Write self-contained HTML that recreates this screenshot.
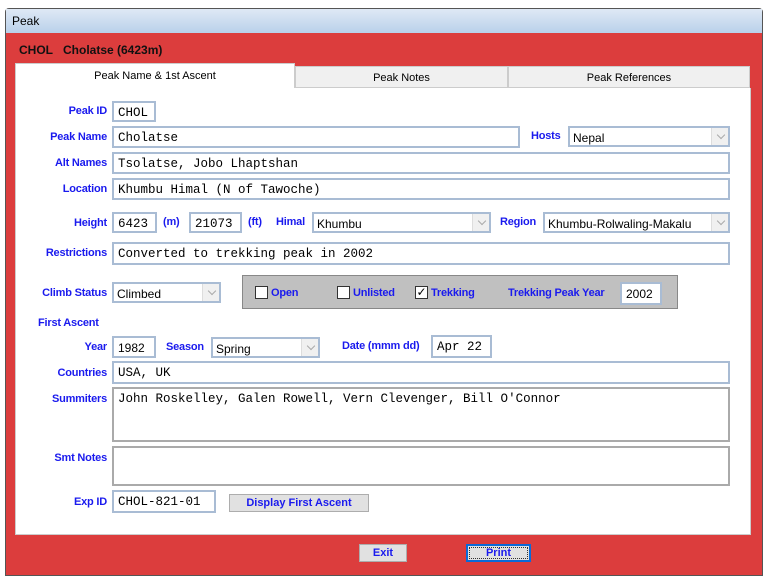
<!DOCTYPE html>
<html><head><style>
*{box-sizing:border-box;margin:0;padding:0}
body{width:768px;height:582px;background:#fff;position:relative;overflow:hidden;font-family:"Liberation Sans",sans-serif}
.a{position:absolute}
.win{left:5px;top:8px;width:758px;height:568px;border:1px solid #555;border-radius:4px 4px 0 0;background:#dc3d3d}
.title{left:6px;top:9px;width:756px;height:24px;background:linear-gradient(#dfe9f5,#b9d1ea);font-size:12px;padding:5px 0 0 6px;color:#000}
.lbl{position:absolute;color:#1a1aee;font-weight:bold;font-size:11px;white-space:nowrap;letter-spacing:-.2px}
.r{text-align:right}
.in{position:absolute;background:#fff;border:2px solid #a9bcd4;font-family:"Liberation Mono",monospace;font-size:12.5px;padding:3px 0 0 4px;white-space:nowrap;color:#000}
.sel{position:absolute;background:#fff;border:2px solid #a9bcd4;font-size:12px;padding:3px 0 0 3px;color:#000}
.sel:after{content:"";position:absolute;right:0;top:0;width:16px;height:100%;background:#f0f0f0;border-left:1px solid #ddd}
.sel b{position:absolute;right:4px;top:4px;width:6px;height:6px;border-right:1px solid #aaa;border-bottom:1px solid #aaa;transform:rotate(45deg);z-index:2}
.cb{position:absolute;width:13px;height:13px;border:1px solid #333;background:#fff}
.btn{position:absolute;background:#e1e1e1;border:1px solid #adadad;color:#1a1aee;font-weight:bold;font-size:11px;text-align:center;padding-top:2px}
</style></head><body>
<div class="a win"></div>
<div class="a title">Peak</div>
<div class="a" style="left:19px;top:43px;font-size:12px;font-weight:bold;color:#111">CHOL&nbsp;&nbsp; Cholatse (6423m)</div>
<div class="a" style="left:15px;top:63px;width:280px;height:27px;background:#fff;border:1px solid #ccc;border-bottom:none;font-size:11px;text-align:center;padding-top:6px">Peak Name &amp; 1st Ascent</div>
<div class="a" style="left:295px;top:66px;width:213px;height:22px;background:#f0f0f0;border:1px solid #ccc;font-size:11px;text-align:center;padding-top:5px">Peak Notes</div>
<div class="a" style="left:508px;top:66px;width:242px;height:22px;background:#f0f0f0;border:1px solid #ccc;font-size:11px;text-align:center;padding-top:5px">Peak References</div>
<div class="a" style="left:15px;top:88px;width:736px;height:447px;background:#fff;border:1px solid #ccc;border-top:none"></div>

<div class="lbl r" style="right:661px;top:105px">Peak ID</div>
<div class="in" style="left:112px;top:101px;width:44px;height:21px">CHOL</div>
<div class="lbl r" style="right:661px;top:131px">Peak Name</div>
<div class="in" style="left:112px;top:126px;width:408px;height:22px">Cholatse</div>
<div class="lbl" style="left:531px;top:130px">Hosts</div>
<div class="sel" style="left:568px;top:126px;width:162px;height:21px">Nepal<b></b></div>
<div class="lbl r" style="right:661px;top:157px">Alt Names</div>
<div class="in" style="left:112px;top:152px;width:618px;height:22px">Tsolatse, Jobo Lhaptshan</div>
<div class="lbl r" style="right:661px;top:183px">Location</div>
<div class="in" style="left:112px;top:178px;width:618px;height:22px">Khumbu Himal (N of Tawoche)</div>

<div class="lbl r" style="right:661px;top:217px">Height</div>
<div class="in" style="left:112px;top:212px;width:45px;height:21px">6423</div>
<div class="lbl" style="left:163px;top:216px">(m)</div>
<div class="in" style="left:189px;top:212px;width:53px;height:21px">21073</div>
<div class="lbl" style="left:248px;top:216px">(ft)</div>
<div class="lbl" style="left:276px;top:216px">Himal</div>
<div class="sel" style="left:312px;top:212px;width:179px;height:21px">Khumbu<b></b></div>
<div class="lbl" style="left:500px;top:216px">Region</div>
<div class="sel" style="left:543px;top:212px;width:187px;height:21px">Khumbu-Rolwaling-Makalu<b></b></div>

<div class="lbl r" style="right:661px;top:247px">Restrictions</div>
<div class="in" style="left:112px;top:242px;width:618px;height:23px">Converted to trekking peak in 2002</div>

<div class="lbl r" style="right:661px;top:287px">Climb Status</div>
<div class="sel" style="left:112px;top:282px;width:109px;height:21px">Climbed<b></b></div>
<div class="a" style="left:242px;top:275px;width:436px;height:34px;background:#c0c0c0;border:1px solid #888"></div>
<div class="cb" style="left:255px;top:286px"></div><div class="lbl" style="left:271px;top:287px">Open</div>
<div class="cb" style="left:337px;top:286px"></div><div class="lbl" style="left:353px;top:287px">Unlisted</div>
<div class="cb" style="left:415px;top:286px;font-size:12px;line-height:11px;text-align:center">✓</div><div class="lbl" style="left:431px;top:287px">Trekking</div>
<div class="lbl" style="left:508px;top:287px">Trekking Peak Year</div>
<div class="in" style="left:620px;top:282px;width:42px;height:23px;font-family:'Liberation Sans',sans-serif;font-size:12px">2002</div>

<div class="lbl" style="left:38px;top:317px">First Ascent</div>
<div class="lbl r" style="right:661px;top:341px">Year</div>
<div class="in" style="left:112px;top:336px;width:44px;height:22px;font-family:'Liberation Sans',sans-serif;font-size:12px">1982</div>
<div class="lbl" style="left:166px;top:341px">Season</div>
<div class="sel" style="left:211px;top:337px;width:109px;height:21px">Spring<b></b></div>
<div class="lbl" style="left:342px;top:340px">Date (mmm dd)</div>
<div class="in" style="left:431px;top:335px;width:61px;height:23px">Apr 22</div>

<div class="lbl r" style="right:661px;top:367px">Countries</div>
<div class="in" style="left:112px;top:361px;width:618px;height:23px">USA, UK</div>
<div class="lbl r" style="right:661px;top:393px">Summiters</div>
<div class="in" style="left:112px;top:387px;width:618px;height:55px;border-color:#aaa">John Roskelley, Galen Rowell, Vern Clevenger, Bill O'Connor</div>
<div class="lbl r" style="right:661px;top:452px">Smt Notes</div>
<div class="in" style="left:112px;top:446px;width:618px;height:40px;border-color:#aaa"></div>
<div class="lbl r" style="right:661px;top:496px">Exp ID</div>
<div class="in" style="left:112px;top:490px;width:104px;height:23px">CHOL-821-01</div>
<div class="btn" style="left:229px;top:494px;width:140px;height:18px">Display First Ascent</div>

<div class="btn" style="left:359px;top:544px;width:48px;height:18px">Exit</div>
<div class="btn" style="left:466px;top:544px;width:65px;height:18px;border:2px solid #0a6ad8;outline:1px dotted #333;outline-offset:-4px;padding-top:1px">Print</div>
</body></html>
